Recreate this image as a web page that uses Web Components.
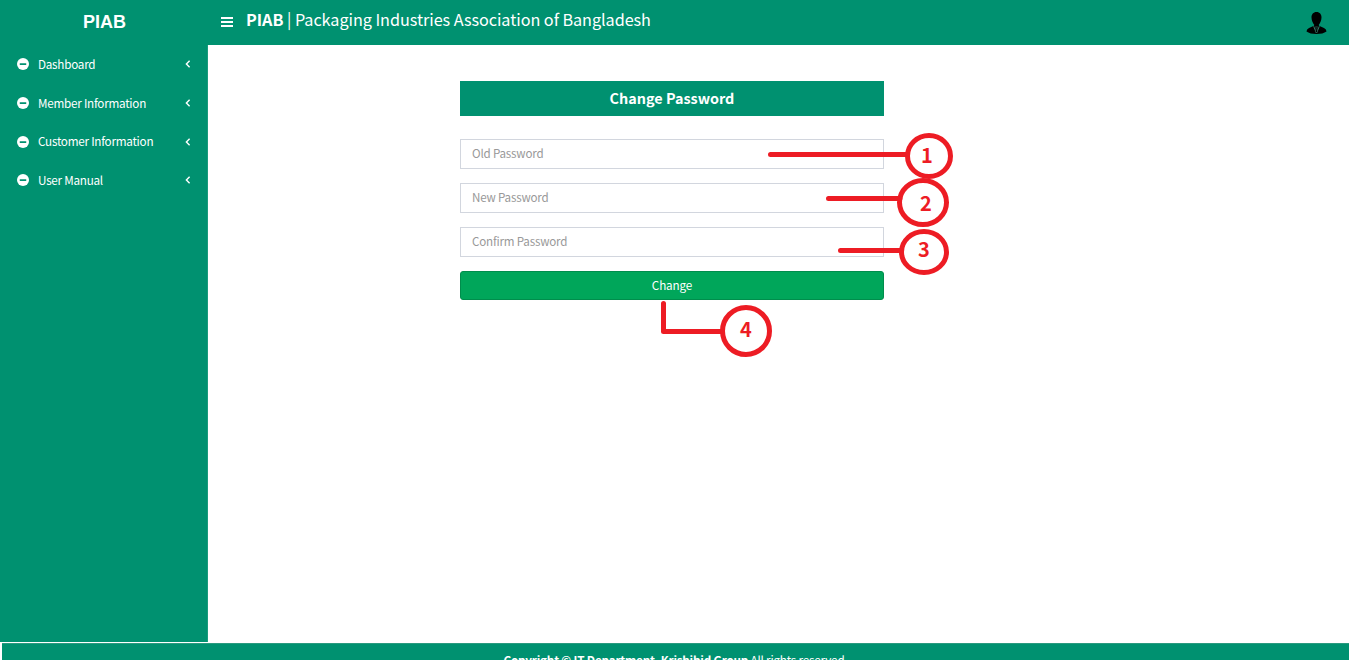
<!DOCTYPE html>
<html lang="en">
<head>
<meta charset="utf-8">
<title>PIAB | Change Password</title>
<style>
html,body{margin:0;height:100%;overflow:hidden;background:#fff}
body{font-family:"Noto Sans CJK SC","Noto Sans",sans-serif}
</style>
</head>
<body>
<piab-app></piab-app>
<script>
function define(name, html) {
  const t = document.createElement('template');
  t.innerHTML = html;
  customElements.define(name, class extends HTMLElement {
    constructor() {
      super();
      this.attachShadow({mode: 'open'}).append(t.content.cloneNode(true));
    }
  });
}

define('nav-item', `<style>
:host{display:flex;align-items:center;height:38.7px;padding:0 16px 0 17px;color:#fff;font-size:11.7px;letter-spacing:-.25px;line-height:18px;white-space:nowrap}
.dot{width:12px;height:12px;margin-right:9px;flex:none}
.label{flex:1;margin-top:-1px}
.arrow{width:6px;height:8px;flex:none}
</style>
<svg class="dot" viewBox="0 0 12 12"><circle cx="6" cy="6" r="6" fill="#fff"/><rect x="2.7" y="5.2" width="6.6" height="1.7" rx=".4" fill="#009170"/></svg>
<span class="label"><slot></slot></span>
<svg class="arrow" viewBox="0 0 6 8"><path d="M4.6 .8 1.4 4l3.2 3.2" fill="none" stroke="#fff" stroke-width="1.4"/></svg>`);

define('side-bar', `<style>
:host{display:block;background:#009170}
.brand{height:45px;text-align:center;font:bold 18px/44px "Liberation Sans",Arial,sans-serif;color:#fff;padding-left:1px}
nav{box-sizing:border-box;height:597px;border-right:1px solid #1a9c7e}
</style>
<div class="brand">PIAB</div>
<nav>
<nav-item>Dashboard</nav-item><nav-item>Member Information</nav-item><nav-item>Customer Information</nav-item><nav-item>User Manual</nav-item>
</nav>`);

define('top-bar', `<style>
:host{display:flex;box-sizing:border-box;height:45px;background:#009170;color:#fff;padding:0 22px 0 13px;align-items:flex-start}
.menu{width:12px;height:10px;margin:17px 13px 0 0}
.title{flex:1;font-size:16.2px;letter-spacing:-.04px;line-height:24px;margin-top:7px;white-space:nowrap}
.user{width:21px;height:23px;margin-top:11px}
</style>
<svg class="menu" viewBox="0 0 12 10"><path d="M0 1h12M0 5h12M0 9h12" stroke="#fff" stroke-width="2"/></svg>
<div class="title"><b>PIAB</b> | Packaging Industries Association of Bangladesh</div>
<svg class="user" viewBox="0 0 21 23"><path d="M10.5 1C13.8 1 15.5 3.400 15.500 6.500 15.500 9.500 14 12.500 12.800 13.700L13 14.800 18 17Q20.500 18.200 20.500 20.500 17 23 10.500 23T.5 20.500Q.5 18.200 3 17L8 14.800 8.200 13.700C7 12.500 5.500 9.500 5.500 6.500 5.500 3.400 7.200 1 10.500 1Z" fill="#000"/><path d="M7.700 15.300 10.400 22M13.300 15.300 10.600 22" stroke="#3e8d79" stroke-width=".9" fill="none"/><path d="M9.500 15.700h2L11 17l.6 3.500-1.100 1.300-1.100-1.300L10 17Z" fill="#000" stroke="#3e8d79" stroke-width=".4"/></svg>`);

define('password-field', `<style>
:host{display:block;box-sizing:border-box;height:30px;border:1px solid #d2d6de;background:#fff;padding:0 11px;font-size:11.6px;letter-spacing:-.19px;line-height:26px;color:#999}
</style><slot></slot>`);

define('submit-button', `<style>
:host{display:block;box-sizing:border-box;height:29px;border:1px solid #008d4c;border-radius:3px;background:#00a65a;color:#fff;text-align:center;font-size:11.7px;letter-spacing:-.15px;line-height:26px}
</style><slot></slot>`);

define('password-form', `<style>
:host{display:grid;grid-template-columns:424px;row-gap:14px}
h1{margin:0 0 9px;height:35px;background:#009170;color:#fff;text-align:center;font-size:14.4px;line-height:33px;font-weight:700}
</style>
<h1>Change Password</h1>
<password-field>Old Password</password-field><password-field>New Password</password-field><password-field>Confirm Password</password-field>
<submit-button>Change</submit-button>`);

define('page-footer', `<style>
:host{display:block;box-sizing:border-box;height:17px;margin-left:2px;background:#009170;border-top:1px solid #2a9a7f;color:#fff;overflow:hidden;text-align:center;font-size:11.7px;letter-spacing:-.195px;line-height:18px;padding-top:7px;white-space:nowrap}
</style><b>Copyright © IT Department, Krishibid Group</b> All rights reserved.`);

define('callout-layer', `<style>
:host{position:absolute;inset:0;pointer-events:none}
svg{display:block}
text{font:700 20px "Noto Sans CJK SC","Noto Sans",sans-serif;fill:#ed1c24;text-anchor:middle}
</style>
<svg width="1349" height="660" viewBox="0 0 1349 660">
<g fill="none" stroke="#ed1c24" stroke-width="5" stroke-linecap="round" stroke-linejoin="round">
<path d="M770.500 154.500H906M828.500 198.500H900M840.500 250.500H901M663.500 303.500V331.500H722"/>
<ellipse cx="929" cy="156" rx="21.500" ry="20.500"/>
<ellipse cx="923" cy="202.500" rx="23.500" ry="22"/>
<ellipse cx="924" cy="252" rx="22.500" ry="20.500"/>
<ellipse cx="746" cy="331" rx="23.500" ry="23.500"/>
</g>
<text x="927" y="163">1</text><text x="926" y="211">2</text><text x="924" y="257">3</text><text x="746" y="337">4</text>
</svg>`);

define('piab-app', `<style>
:host{display:grid;position:relative;width:1349px;height:660px;grid-template:45px 597px 1px 17px / 208px 1fr;overflow:hidden}
side-bar{grid-area:1/1/3/2}
top-bar{grid-area:1/2}
main{grid-area:2/2;padding:36px 0 0 252px}
page-footer{grid-area:4/1/5/3}
</style>
<side-bar></side-bar><top-bar></top-bar><main><password-form></password-form></main><page-footer></page-footer><callout-layer></callout-layer>`);
</script>
</body>
</html>
